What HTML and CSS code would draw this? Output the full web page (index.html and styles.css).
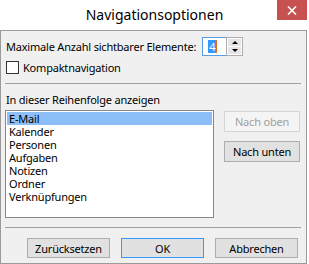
FILE: index.html
```html
<!DOCTYPE html>
<html lang="de">
<head>
    <meta charset="UTF-8">
    <title>Navigationsoptionen</title>
    <link rel="stylesheet" href="styles.css">
</head>
<body>
    <div class="window">
        <div class="title-bar">
            <span></span>
            <span class="title">Navigationsoptionen</span>
            <button class="close-btn" aria-label="Schließen">
                <svg width="10" height="9" viewBox="0 0 10 9">
                    <path d="M1 0.5 L9 8.5 M9 0.5 L1 8.5" stroke="#fff" stroke-width="1.6"/>
                </svg>
            </button>
        </div>

        <div class="client">
            <div class="row max-row">
                <label for="maxItems">Maximale Anzahl sichtbarer Elemente:</label>
                <div class="spinner">
                    <div class="spin-text"><span class="selected-val">4</span><span class="caret"></span></div>
                    <div class="spin-buttons">
                        <div class="spin-btn"><span class="arrow-up"></span></div>
                        <div class="spin-btn"><span class="arrow-down"></span></div>
                    </div>
                </div>
            </div>

            <div class="row check-row">
                <span class="checkbox"></span>
                <span>Kompaktnavigation</span>
            </div>

            <div class="separator sep-top"></div>

            <div class="section-label">In dieser Reihenfolge anzeigen</div>

            <div class="order-area">
                <ul class="listbox">
                    <li class="selected">E-Mail</li>
                    <li>Kalender</li>
                    <li>Personen</li>
                    <li>Aufgaben</li>
                    <li>Notizen</li>
                    <li>Ordner</li>
                    <li>Verknüpfungen</li>
                </ul>
                <div class="side-buttons">
                    <button class="btn" disabled>Nach oben</button>
                    <button class="btn">Nach unten</button>
                </div>
            </div>

            <div class="separator sep-bottom"></div>

            <div class="footer">
                <button class="btn">Zurücksetzen</button>
                <button class="btn default">OK</button>
                <button class="btn">Abbrechen</button>
            </div>
        </div>
    </div>
</body>
</html>
```

FILE: styles.css
```css
body {
    margin: 0;
    background-color: #fff;
    font-family: "Noto Sans", "DejaVu Sans", sans-serif;
    font-size: 11px;
    letter-spacing: -0.2px;
    line-height: 14px;
    color: #000;
}
.window {
    width: 309px;
    height: 264px;
    display: flex;
    flex-direction: column;
}
.title-bar {
    height: 30px;
    flex: none;
    display: grid;
    grid-template-columns: 1fr auto 1fr;
    align-items: start;
}
.title {
    font-size: 14px;
    letter-spacing: 0;
    line-height: 30px;
    color: #000;
}
.close-btn {
    justify-self: end;
    width: 30px;
    height: 20px;
    margin-right: 2px;
    border: none;
    padding: 0;
    background-color: #c75050;
    display: flex;
    align-items: center;
    justify-content: center;
}
.client {
    width: 305px;
    height: 232px;
    flex: none;
    border: 1px solid #9a9a9a;
    background-color: #f0f0f0;
    display: flex;
    flex-direction: column;
}
.row {
    display: flex;
    align-items: center;
    padding-left: 5px;
}
.max-row {
    height: 19px;
    margin-top: 6px;
    gap: 6px;
}
.spinner {
    display: flex;
    height: 19px;
}
.spin-text {
    width: 24px;
    border: 1px solid #569de5;
    border-right: none;
    background-color: #fff;
    display: flex;
    align-items: center;
    padding-left: 5px;
    box-sizing: border-box;
}
.selected-val {
    background-color: #3399ff;
    color: #fff;
    line-height: 13px;
    padding: 0 1px;
}
.caret {
    width: 1px;
    height: 13px;
    background-color: #e07020;
}
.spin-buttons {
    width: 17px;
    border: 1px solid #adadad;
    box-sizing: border-box;
    display: flex;
    flex-direction: column;
    padding: 1px;
    gap: 1px;
    background-color: #fff;
}
.spin-btn {
    flex: 1;
    background-color: #e5e5e5;
    display: flex;
    align-items: center;
    justify-content: center;
}
.arrow-up, .arrow-down {
    width: 0;
    height: 0;
    border-left: 3px solid transparent;
    border-right: 3px solid transparent;
}
.arrow-up {
    border-bottom: 3px solid #000;
}
.arrow-down {
    border-top: 3px solid #000;
}
.check-row {
    height: 13px;
    margin-top: 5px;
    gap: 4px;
}
.checkbox {
    width: 11px;
    height: 11px;
    border: 1px solid #333;
    background-color: #fff;
}
.separator {
    height: 1px;
    flex: none;
    margin: 0 5px 0 4px;
    background-color: #a0a0a0;
}
.sep-top {
    margin-top: 9px;
}
.section-label {
    padding-left: 5px;
    margin-top: 9px;
    height: 14px;
}
.order-area {
    display: flex;
    margin-top: 3px;
    padding-left: 4px;
    gap: 10px;
}
.listbox {
    list-style: none;
    margin: 0;
    padding: 1px;
    width: 209px;
    height: 108px;
    box-sizing: border-box;
    border: 1px solid #828790;
    background-color: #fff;
}
.listbox li {
    height: 13px;
    line-height: 13px;
    padding-left: 2px;
}
.listbox li.selected {
    background-color: #8cbff7;
}
.side-buttons {
    display: flex;
    flex-direction: column;
    gap: 9px;
    padding-top: 1px;
}
.btn {
    font-family: inherit;
    font-size: 11px;
    letter-spacing: -0.2px;
    color: #000;
    width: 76px;
    height: 21px;
    padding: 0;
    border: 1px solid #adadad;
    background-color: #e1e1e1;
}
.btn:disabled {
    color: #a0a0a0;
    border-color: #d4d4d4;
    background-color: #f4f4f4;
}
.sep-bottom {
    margin-top: 9px;
}
.footer {
    display: flex;
    gap: 11px;
    padding-left: 26px;
    margin-top: 10px;
}
.footer .btn {
    width: 83px;
    height: 20px;
}
.btn.default {
    border-color: #3399ff;
}
```
